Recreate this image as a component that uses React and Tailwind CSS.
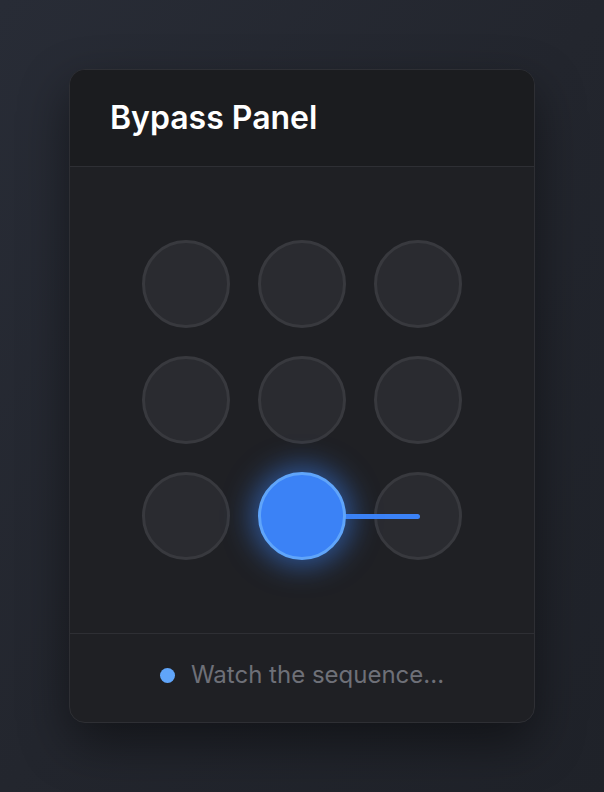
const dots = [0, 1, 2, 3, 4, 5, 6, 7, 8];
const active = 7;

function Dot({ lit }) {
  return (
    <div
      className={
        lit
          ? 'relative z-10 h-[88px] w-[88px] rounded-full border-[3px] border-[#60a5fa] bg-[#3b82f6] shadow-[0_0_28px_6px_rgba(59,130,246,0.55)]'
          : 'h-[88px] w-[88px] rounded-full border-[3px] border-[#38393e] bg-[#2a2b30]'
      }
    />
  );
}

export default function App() {
  return (
    <div
      className="flex min-h-screen items-start justify-center bg-gradient-to-br from-[#282c36] via-[#23262e] to-[#1f2229] pt-[69px]"
      style={{ fontFamily: 'Inter, "Noto Sans", sans-serif' }}
    >
      <div className="w-[466px] overflow-hidden rounded-2xl border border-[#2e2f34] bg-[#1f2024] shadow-[0_20px_50px_rgba(0,0,0,0.45)]">
        <header className="flex h-[97px] items-center border-b border-[#2e2f34] bg-[#1b1c1f] px-10">
          <h1 className="text-[32px] font-semibold leading-none text-white">Bypass Panel</h1>
        </header>

        <div className="flex justify-center py-[73px]">
          <div className="relative grid grid-cols-3 gap-7">
            {dots.map((i) => (
              <Dot key={i} lit={i === active} />
            ))}
            <div className="absolute left-[160px] top-[274px] h-[5px] w-[118px] rounded-full bg-[#3b82f6]" />
          </div>
        </div>

        <footer className="flex h-[89px] items-center justify-center gap-4 border-t border-[#2e2f34] pb-[6px]">
          <span className="h-[15px] w-[15px] rounded-full bg-[#60a5fa]" />
          <span className="text-[24px] leading-8 text-[#6e7078]">Watch the sequence...</span>
        </footer>
      </div>
    </div>
  );
}
